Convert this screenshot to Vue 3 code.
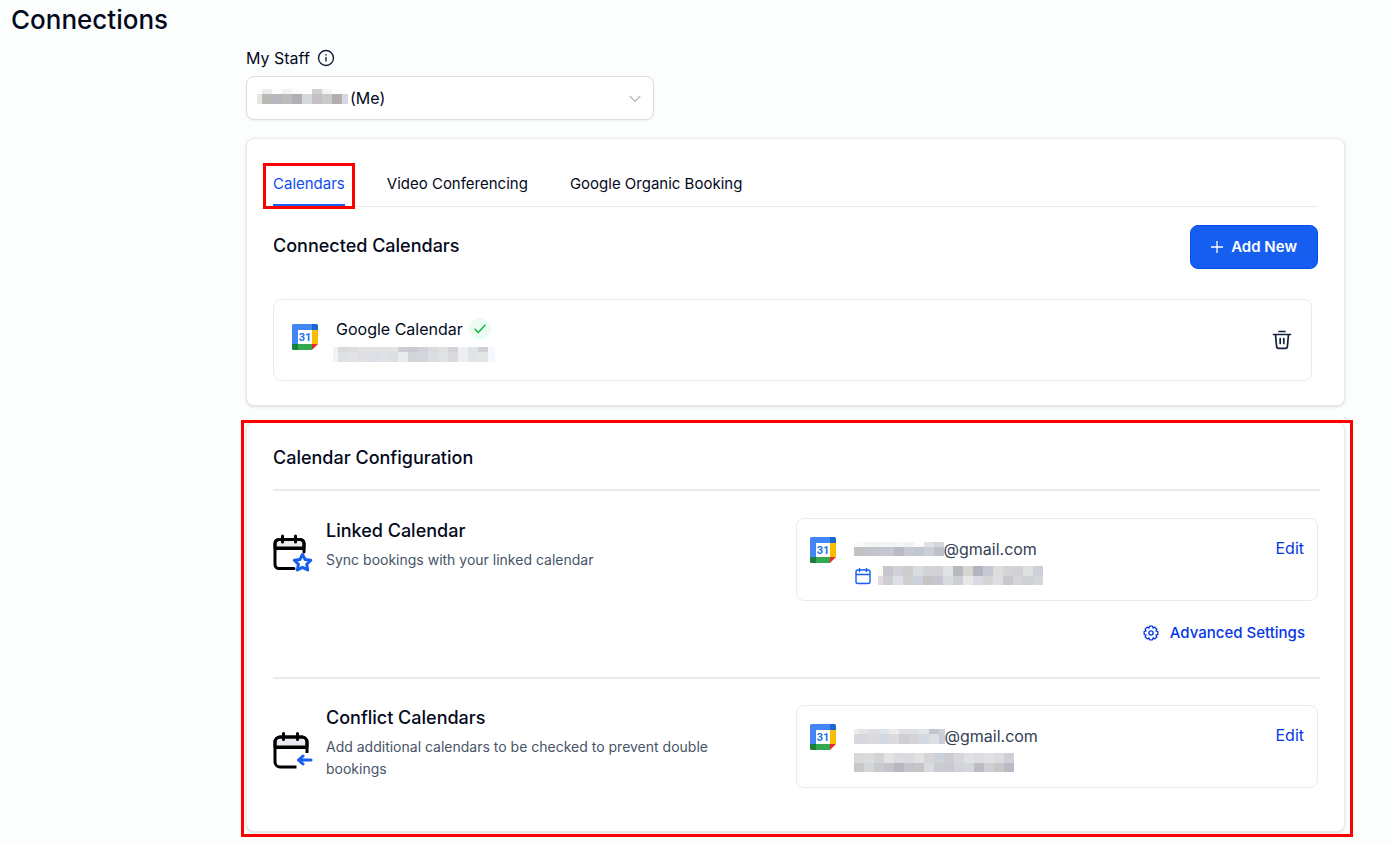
<script setup>
import { ref, h } from 'vue'

const tabs = ['Calendars', 'Video Conferencing', 'Google Organic Booking']
const activeTab = ref('Calendars')
const staff = ref('me')

/* hidden names: rows of coloured tiles */
const masks = {
  staff: {
    first: 5, last: 6, heights: [5, 10],
    rows: [
      '#fcfefd #ebebeb #fcfdfd #f3f3f3 #fbfbfb #fcfdfd #d0d0d0 #f3f3f3 #fcfdfd #fcfefd',
      '#e9e4e0 #b9b9b7 #b8b7be #bbbbbc #afafb5 #d6d8da #c5c0c3 #c9cbca #b3aeae #d5d9df'
    ]
  },
  account: {
    first: 5, last: 7, heights: [5, 10],
    rows: [
      '#f3f1f1 #d8dade #dcdddf #e2e2e3 #dfe1e3 #e0e1e4 #e2e3e5 #cdced3 #c9cbd1 #cfd1d6 #d9dbde #e0dfe1 #d3d2d6 #eeeff1 #dfe2e6 #d0d1d5 #f5f9fe',
      '#f5f3f2 #dde0e5 #e1e3e6 #e0e0e3 #dcdfe5 #dfe1e7 #dcdee3 #eaebee #d3d5da #d4d6db #dadde2 #e1e2e5 #dad9df #eceef0 #dfe4e8 #e5e5e6 #f3f8fe'
    ]
  },
  linkedMail: {
    first: 10, last: 10, heights: [5, 9],
    rows: [
      '#fbfafa #f4f4f4 #f3f4f4 #f5f4f4 #f4f5f6 #f2f2f3 #fcfcfc #e0e0e5 #d6d7dd',
      '#c0c2c6 #c2c3ca #c3c6cf #c5c8d0 #b9bac3 #c6c9d1 #c2c6ce #cbcfd8 #bec0ca'
    ]
  },
  linkedName: {
    first: 5, last: 10, heights: [10, 9],
    rows: [
      '#fcf8f4 #c7c6ce #cfd3d8 #cecdcd #dadcdf #d2d3d8 #d1d1d6 #dfe1e5 #b8b9c0 #d6d5d2 #b3b4bc #c4c9d3 #dcdedc #d4d4d7 #d0d0d8 #dde0de #cdd0d8',
      '#e2dddd #cfcdd0 #dce0e4 #d0cfd0 #cbd1da #c5c5c5 #c7c6d0 #d8dade #cecfd5 #e9e7e8 #d8dbe3 #d5d5d8 #dedfe2 #c9c9c9 #d4d4da #cfd0d2 #d5d6dc'
    ]
  },
  conflictMail: {
    first: 5, last: 6, heights: [5, 10],
    rows: [
      '#ececec #e3e2e4 #dddce0 #dfe3ea #ebebeb #dfdee2 #dedfe1 #e1e5ea #c3c5cd #ced1da',
      '#dcd8da #d5d9dd #dbdadd #d3dae4 #dadbde #cfced3 #d3d3d8 #d2dae4 #dedfe3 #c9cdd7'
    ]
  },
  conflictName: {
    first: 10, last: 10, heights: [10, 9],
    rows: [
      '#d8d8db #dadbdc #d4d4d7 #e2e3e5 #dcdce0 #dadbe2 #e2e2e3 #d8d5d8 #cbd2da #cccccf #d6d6dc #dfe1e5 #dddee2 #e0e1e6 #dbdce2 #cfcfd6',
      '#c8c8ca #d4d7da #cac9cc #c4c4cb #b9b8bf #c3c3ce #c6c6c9 #dadbde #cccbd2 #c8c9d2 #d2d3d6 #d3d6dd #bdbcc3 #cfcfd3 #c8c7c6 #b9bac6'
    ]
  }
}

function Mask({ name }) {
  const { first, last, heights, rows } = masks[name]
  const tiles = []
  let y = 0
  let width = 0

  rows.forEach((row, r) => {
    const colors = row.split(' ')
    let x = 0
    colors.forEach((fill, c) => {
      const w = c === 0 ? first : c === colors.length - 1 ? last : 10
      tiles.push(h('rect', { x, y, width: w, height: heights[r], fill }))
      x += w
    })
    width = x
    y += heights[r]
  })

  return h('svg', { width, height: y, 'aria-hidden': 'true', 'shape-rendering': 'crispEdges' }, tiles)
}
Mask.props = ['name']

/* google calendar logo */
const logoParts = [
  ['M1.500 0H20v6H6v14H0V1.500A1.500 1.500 0 0 1 1.500 0Z', '#4285f4'],
  ['M20 0h4.500A1.500 1.500 0 0 1 26 1.500V6h-6Z', '#1967d2'],
  ['M20 6h6v14h-6Z', '#fbbc04'],
  ['M6 20h14v6H6Z', '#34a853'],
  ['M0 20h6v6H1.500A1.500 1.500 0 0 1 0 24.500Z', '#188038'],
  ['M20 20h6l-6 6Z', '#ea2a2a'],
  ['M6 6h14v14H6Z', '#fff']
]

function CalendarLogo() {
  return h('svg', { width: 26, height: 26, viewBox: '0 0 26 26' }, [
    ...logoParts.map(([d, fill]) => h('path', { d, fill })),
    h('text', {
      x: 13, y: 17, fill: '#1a73e8', 'text-anchor': 'middle',
      'font-family': 'Roboto, sans-serif', 'font-size': 11, 'font-weight': 700
    }, '31')
  ])
}
</script>

<template>
  <div class="page">
    <h1>Connections</h1>

    <main class="content">
      <!-- staff picker -->
      <div class="staff-label">
        <label for="staff">My Staff</label>
        <svg width="18" height="18" viewBox="0 0 18 18" fill="none" stroke="#14203a" stroke-width="1.400" stroke-linecap="round">
          <circle cx="9" cy="9" r="7.500" />
          <path d="M9 8.500v3.500M9 5.800v.2" />
        </svg>
      </div>
      <div class="staff-select">
        <select id="staff" v-model="staff">
          <option value="me">(Me)</option>
        </select>
        <Mask name="staff" class="staff-mask" />
        <svg class="chevron" width="12" height="8" viewBox="0 0 12 8" fill="none" stroke="#b4b6bb" stroke-width="1.300">
          <path d="M.8 1 6 6.400 11.200 1" />
        </svg>
      </div>

      <!-- connected calendars -->
      <section class="card connected">
        <div class="tabs" role="tablist">
          <button
            v-for="tab in tabs"
            :key="tab"
            class="tab"
            :class="{ active: tab === activeTab, marked: tab === 'Calendars' }"
            role="tab"
            :aria-selected="tab === activeTab"
            @click="activeTab = tab"
          >
            {{ tab }}
          </button>
        </div>

        <div class="connected-head">
          <h2>Connected Calendars</h2>
          <button class="add">
            <svg width="12" height="12" viewBox="0 0 12 12" stroke="#fff" stroke-width="1.300">
              <path d="M6 0v12M0 6h12" />
            </svg>
            Add New
          </button>
        </div>

        <div class="box account">
          <CalendarLogo class="logo" />
          <div class="account-text">
            <div class="account-name">
              <span>Google Calendar</span>
              <span class="check">
                <svg width="12" height="10" viewBox="0 0 12 10" fill="none" stroke="#12b74a" stroke-width="1.500" stroke-linecap="round" stroke-linejoin="round">
                  <path d="M1 5.200 4.200 8.500 11 1.200" />
                </svg>
              </span>
            </div>
            <Mask name="account" class="account-mask" />
          </div>
          <button class="trash" aria-label="Remove calendar">
            <svg width="20" height="20" viewBox="0 0 20 20" fill="none" stroke="#14203a" stroke-width="1.700" stroke-linecap="round" stroke-linejoin="round">
              <path d="M7 1.500h6M1.500 4.500h17M3.500 4.500 4.600 16.500a2 2 0 0 0 2 1.900h6.800a2 2 0 0 0 2-1.900L16.500 4.500M8.200 8.500v5M11.800 8.500v5" />
            </svg>
          </button>
        </div>
      </section>

      <!-- calendar configuration -->
      <section class="card config">
        <h2>Calendar Configuration</h2>

        <div class="config-row">
          <svg class="config-icon" width="40" height="40" viewBox="0 0 40 40" fill="none" stroke="#000" stroke-width="3" stroke-linecap="round" stroke-linejoin="round">
            <path d="M2 14V9.500A4 4 0 0 1 6 5.500h21a4 4 0 0 1 4 4V14Z" fill="#eaebf0" />
            <path d="M31 18V9.500a4 4 0 0 0-4-4H6a4 4 0 0 0-4 4v21a4 4 0 0 0 4 4h15M2 14.500h29M9.500 2v6M22.500 2v6" />
            <path d="m29.500 20.500 2.600 5 5.700.8-4.100 4 1 5.600-5.200-2.600-5.100 2.600 1-5.600-4.100-4 5.600-.8Z" fill="#fff" stroke="#155eef" />
          </svg>
          <div class="config-text">
            <h3>Linked Calendar</h3>
            <p>Sync bookings with your linked calendar</p>
          </div>
          <div class="config-side">
            <div class="box target">
              <CalendarLogo />
              <div class="target-text">
                <div class="mail"><Mask name="linkedMail" /><span>@gmail.com</span></div>
                <div class="calendar-name">
                  <svg width="18" height="18" viewBox="0 0 18 18" fill="none" stroke="#155eef" stroke-width="1.400" stroke-linecap="round">
                    <path d="M4 3h10a2 2 0 0 1 2 2v9.500a2 2 0 0 1-2 2H4a2 2 0 0 1-2-2V5a2 2 0 0 1 2-2ZM2 7.500h14M5.500 1.500v3M12.500 1.500v3" />
                  </svg>
                  <Mask name="linkedName" />
                </div>
              </div>
              <a href="#" class="edit">Edit</a>
            </div>
            <a href="#" class="advanced">
              <svg width="16" height="16" viewBox="0 0 24 24" fill="none" stroke="#0636e6" stroke-width="2" stroke-linejoin="round">
                <path d="M22.270 9.820v4.360L19.390 15.060l1.420 2.660-3.090 3.090-2.660-1.420-.88 2.880H9.820l-.88-2.880-2.660 1.420-3.090-3.090 1.420-2.660-2.880-.88V9.820l2.880-.88-1.420-2.660 3.090-3.090 2.660 1.420.88-2.880h4.360l.88 2.880 2.660-1.420 3.090 3.090-1.420 2.660Z" />
                <circle cx="12" cy="12" r="3.200" />
              </svg>
              Advanced Settings
            </a>
          </div>
        </div>

        <div class="config-row">
          <svg class="config-icon" width="40" height="40" viewBox="0 0 40 40" fill="none" stroke="#000" stroke-width="3" stroke-linecap="round" stroke-linejoin="round">
            <path d="M2 16V11a5 5 0 0 1 5-5h22a5 5 0 0 1 5 5v5Z" fill="#eaebf0" />
            <path d="M34 22V11a5 5 0 0 0-5-5H7a5 5 0 0 0-5 5v20a5 5 0 0 0 5 5h16.500M2 16.500h32" stroke-linecap="butt" />
            <path d="M10.500 2.500v6M24.500 2.500v6" />
            <path d="M38 29H26M30 25l-4.500 4 4.500 4" stroke="#155eef" />
          </svg>
          <div class="config-text">
            <h3>Conflict Calendars</h3>
            <p>Add additional calendars to be checked to prevent double bookings</p>
          </div>
          <div class="config-side">
            <div class="box target">
              <CalendarLogo />
              <div class="target-text">
                <div class="mail"><Mask name="conflictMail" /><span>@gmail.com</span></div>
                <div class="calendar-name"><Mask name="conflictName" /></div>
              </div>
              <a href="#" class="edit">Edit</a>
            </div>
          </div>
        </div>
      </section>
    </main>
  </div>
</template>

<style>
body {
  margin: 0;
  background: #fcfefd;
}
</style>

<style scoped>
.page {
  font-family: Inter, "Liberation Sans", sans-serif;
  font-size: 16px;
  line-height: 24px;
  color: #030a1c;
}

svg {
  display: block;
  flex: none;
}

h1, h2, h3, p {
  margin: 0;
  font-weight: 500;
}

h1 {
  padding: 4px 11px;
  font-size: 26px;
  line-height: 32px;
}

h2, h3 {
  font-size: 18px;
  line-height: 24px;
}

button, select {
  font: inherit;
  color: inherit;
  cursor: pointer;
}

button {
  padding: 0;
  border: 0;
  background: none;
}

a {
  color: #0636e6;
  text-decoration: none;
}

.content {
  padding: 6px 47px 8px 246px;
}

/* staff picker */
.staff-label {
  display: flex;
  align-items: center;
  gap: 7px;
  padding-bottom: 6px;
}

.staff-select {
  position: relative;
  width: 408px;
  max-width: 100%;
}

.staff-select select {
  display: block;
  width: 100%;
  height: 44px;
  padding: 0 40px 0 103px;
  border: 1px solid #dcdde3;
  border-radius: 8px;
  background: #fff;
  box-shadow: 0 1px 2px rgba(16, 24, 40, 0.06);
  appearance: none;
}

.staff-mask {
  position: absolute;
  top: 13px;
  left: 11px;
  pointer-events: none;
}

.chevron {
  position: absolute;
  top: 19px;
  right: 13px;
  pointer-events: none;
}

/* cards */
.card {
  border: 1px solid #e9eaee;
  border-radius: 8px;
  background: #fff;
  box-shadow: 0 1px 3px rgba(16, 24, 40, 0.14);
}

.box {
  display: flex;
  box-sizing: border-box;
  border: 1px solid #eaebef;
  border-radius: 8px;
}

.connected {
  margin-top: 18px;
  padding: 24px 26px;
}

.tabs {
  display: flex;
  gap: 42px;
  border-bottom: 1px solid #eaecf0;
}

.tab {
  position: relative;
  height: 43px;
  padding-bottom: 2px;
  font-size: 15px;
}

.tab.active {
  color: #0f4bef;
  box-shadow: inset 0 -2px #155eef;
}

.tab.marked::after {
  content: "";
  position: absolute;
  inset: 0 -10px -3px -10px;
  border: 3px solid #f00;
}

.connected-head {
  display: flex;
  justify-content: space-between;
  padding: 18px 0 30px;
}

.connected-head h2 {
  padding-top: 9px;
}

.add {
  display: flex;
  align-items: center;
  gap: 8px;
  height: 44px;
  padding: 0 20px;
  border: 1px solid #004eeb;
  border-radius: 8px;
  background: #155eef;
  color: #fff;
  font-size: 15px;
  font-weight: 600;
}

.account {
  align-items: center;
  height: 82px;
  margin-right: 6px;
  padding: 0 19px 0 18px;
}

.logo {
  margin-bottom: 6px;
}

.account-text {
  flex: 1;
  padding: 0 18px 2px;
}

.account-name {
  display: flex;
  align-items: center;
  gap: 6px;
}

.check {
  display: flex;
  align-items: center;
  justify-content: center;
  width: 22px;
  height: 22px;
  border-radius: 50%;
  background: #edfcf2;
}

.account-mask {
  margin: 6px 0 0 -3px;
}

/* configuration */
.config {
  position: relative;
  margin-top: 16px;
  padding: 23px 24px 43px 26px;
}

.config::after {
  content: "";
  position: absolute;
  inset: -3px -9px -6px -6px;
  border: 3px solid #f00;
  pointer-events: none;
}

.config h2 {
  padding-bottom: 19px;
}

.config-row {
  display: flex;
  align-items: flex-start;
  padding: 27px 2px 0 0;
  border-top: 2px solid #e9eaee;
}

.config-row + .config-row {
  padding-top: 26px;
}

.config-icon {
  margin: 16px 13px 0 0;
}

.config-row + .config-row .config-icon {
  margin-top: 26px;
}

.config-text {
  flex: 1;
  padding-top: 1px;
}

.config-text p {
  max-width: 400px;
  padding-top: 6px;
  font-size: 14px;
  font-weight: 400;
  line-height: 22px;
  color: #475467;
}

.config-side {
  width: 50%;
}

.target {
  height: 83px;
  padding: 18px 13px;
}

.target-text {
  flex: 1;
  padding-left: 18px;
}

.mail {
  display: flex;
  align-items: center;
  color: #344054;
}

.calendar-name {
  display: flex;
  align-items: center;
  gap: 6px;
  padding-top: 5px;
}

.edit {
  line-height: 22px;
}

.advanced {
  display: flex;
  align-items: center;
  justify-content: flex-end;
  gap: 11px;
  padding: 20px 13px 32px;
  font-size: 15px;
  font-weight: 500;
}
</style>
